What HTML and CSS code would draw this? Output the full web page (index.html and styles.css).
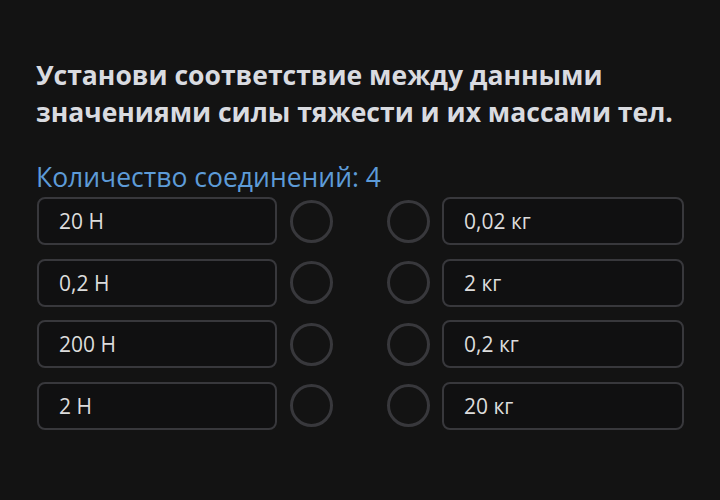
FILE: index.html
```html
<!DOCTYPE html>
<html lang="ru">
<head>
<meta charset="utf-8">
<link rel="stylesheet" href="styles.css">
</head>
<body>
<div class="page">
  <h1 class="title">Установи соответствие между данными значениями силы тяжести и их массами тел.</h1>
  <div class="count">Количество соединений: 4</div>
  <div class="grid">
    <div class="item">20 Н</div><div class="dot"></div><div class="dot dot-r"></div><div class="item item-r">0,02 кг</div>
    <div class="item">0,2 Н</div><div class="dot"></div><div class="dot dot-r"></div><div class="item item-r">2 кг</div>
    <div class="item">200 Н</div><div class="dot"></div><div class="dot dot-r"></div><div class="item item-r">0,2 кг</div>
    <div class="item">2 Н</div><div class="dot"></div><div class="dot dot-r"></div><div class="item item-r">20 кг</div>
  </div>
</div>
</body>
</html>
```

FILE: styles.css
```css
html, body {
  margin: 0;
  padding: 0;
  background: #131313;
  width: 720px;
  height: 500px;
  overflow: hidden;
}
.page {
  padding: 57px 0 0 36px;
  font-family: "Open Sans", "Noto Sans", sans-serif;
}
.title {
  margin: 0;
  font-size: 26.5px;
  line-height: 37px;
  font-weight: 700;
  color: #d9dbe0;
  width: 670px;
}
.count {
  margin-top: 29px;
  font-size: 26.5px;
  line-height: 34px;
  color: #5d9bd8;
}
.grid {
  display: grid;
  grid-template-columns: 240px 56px 97px 254px;
  column-gap: 0;
  row-gap: 13.5px;
  margin-top: 3px;
  margin-left: 1px;
  align-items: center;
}
.item {
  box-sizing: border-box;
  height: 48px;
  border: 2px solid #38383c;
  border-radius: 8px;
  background: #101011;
  color: #dcdcdc;
  font-size: 21px;
  display: flex;
  align-items: center;
  padding-left: 20px;
}
.item-r {
  margin-left: 12px;
}
.dot {
  box-sizing: border-box;
  width: 43px;
  height: 43px;
  border: 3px solid #38383c;
  border-radius: 50%;
  justify-self: end;
}
```
